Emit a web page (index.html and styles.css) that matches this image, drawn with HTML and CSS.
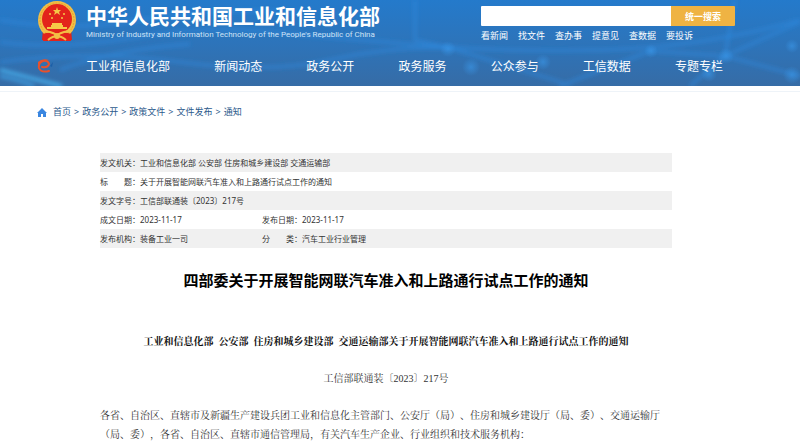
FILE: index.html
```html
<!DOCTYPE html>
<html lang="zh-CN">
  <head>
    <meta charset="UTF-8" />
    <meta name="viewport" content="width=device-width, initial-scale=1.0" />
    <title>四部委关于开展智能网联汽车准入和上路通行试点工作的通知</title>
    <link rel="stylesheet" href="styles.css">
  </head>
  <body>
    <header class="header">
      <svg class="header-bg" viewBox="0 0 800 86" preserveAspectRatio="none" aria-hidden="true">
        <defs>
          <linearGradient id="sky" x1="0" y1="0" x2="0" y2="1">
            <stop offset="0" stop-color="#247acb" />
            <stop offset="0.5" stop-color="#2d74ba" />
            <stop offset="1" stop-color="#366ca6" />
          </linearGradient>
          <radialGradient id="dot">
            <stop offset="0" stop-color="#3b9bee" stop-opacity="0.55" />
            <stop offset="1" stop-color="#3b9bee" stop-opacity="0" />
          </radialGradient>
          <filter id="soft" x="-10%" y="-50%" width="120%" height="200%">
            <feGaussianBlur stdDeviation="2" />
          </filter>
        </defs>
        <rect width="800" height="86" fill="url(#sky)" />
        <g fill="none" stroke="#2f8be0" stroke-opacity="0.6" stroke-width="3" filter="url(#soft)">
          <path d="M0 42Q60 50 130 38T270 32T420 45T600 50T800 20" />
          <path d="M0 20Q70 32 140 20T300 12" />
          <path d="M0 62Q90 50 180 62T330 60T450 48" />
          <path d="M60 70Q110 50 190 44" />
          <path d="M415 0V40L450 48L570 85M650 51L725 56L800 22M725 56L690 86M650 51L560 86M735 0L725 56L800 76" />
        </g>
        <path d="M0 70Q22 76 62 86" fill="none" stroke="#49b4f0" stroke-width="3" filter="url(#soft)" />
        <path d="M0 76Q20 80 34 86" fill="none" stroke="#3f9fe0" stroke-width="3" filter="url(#soft)" />
        <g fill="url(#dot)">
          <circle cx="448" cy="49" r="8" />
          <circle cx="471" cy="67" r="9" />
          <circle cx="543" cy="62" r="8" />
          <circle cx="651" cy="51" r="7" />
          <circle cx="726" cy="56" r="8" />
          <circle cx="709" cy="74" r="8" />
          <circle cx="792" cy="46" r="7" />
          <circle cx="792" cy="75" r="9" />
        </g>
      </svg>

      <div class="header-inner">
        <div class="top">
          <a class="brand" href="#">
            <svg class="emblem" viewBox="0 0 40 42" aria-hidden="true">
              <path d="M6 29L5 40Q12 39 14 41H26Q28 39 35 40L34 29Z" fill="#d8261c" />
              <circle cx="20" cy="20" r="19" fill="#f3bf45" />
              <circle cx="20" cy="20" r="17" fill="none" stroke="#e0a334" stroke-width="1" stroke-dasharray="2 1" />
              <circle cx="20" cy="19" r="15" fill="#e3241b" />
              <path d="M20 7l1 3h3l-2 2 1 3-3-2-3 2 1-3-2-2h3Z" fill="#f6c948" />
              <g fill="#f6c948">
                <circle cx="13" cy="14" r="1" />
                <circle cx="27" cy="14" r="1" />
                <circle cx="15" cy="18" r="1" />
                <circle cx="25" cy="18" r="1" />
                <path d="M15 23h10v2H15ZM14 25h12v2h4v2H10v-2h4Z" />
              </g>
              <path d="M6 34Q13 31 20 35Q27 31 34 34L34 41H6Z" fill="#e3241b" />
              <path d="M6 31Q13 31 20 35Q27 31 34 31M11 40Q16 36 20 36Q24 36 29 40" fill="none" stroke="#f3bf45" stroke-width="2" />
              <circle cx="20" cy="36" r="3" fill="#f3bf45" />
            </svg>
            <span class="brand-text">
              <span class="brand-cn">中华人民共和国工业和信息化部</span>
              <span class="brand-en">Ministry of Industry and Information Technology of the People's Republic of China</span>
            </span>
          </a>

          <div class="search">
            <form class="search-form">
              <input type="text" class="search-input" aria-label="搜索" />
              <button type="submit" class="search-btn">统一搜索</button>
            </form>
            <div class="quick">
              <a href="#">看新闻</a>
              <a href="#">找文件</a>
              <a href="#">查办事</a>
              <a href="#">提意见</a>
              <a href="#">查数据</a>
              <a href="#">要投诉</a>
            </div>
          </div>
        </div>

        <nav class="nav">
          <svg class="nav-logo" viewBox="0 0 16 16" aria-hidden="true">
            <path d="M5 9Q11 10 12 6Q11 2 6 3Q1 5 2 10Q4 15 12 13" fill="none" stroke="#e8512b" stroke-width="2" stroke-linecap="round" />
            <path d="M1 4Q5 0 12 2Q5 2 1 7Z" fill="#e8512b" />
            <path d="M13 8l3-4-1 5Z" fill="#1c5fa8" />
          </svg>
          <div class="nav-links">
            <a href="#">工业和信息化部</a>
            <a href="#">新闻动态</a>
            <a href="#">政务公开</a>
            <a href="#">政务服务</a>
            <a href="#">公众参与</a>
            <a href="#">工信数据</a>
            <a href="#">专题专栏</a>
          </div>
        </nav>
      </div>
    </header>

    <main class="main">
      <div class="crumbs">
        <svg class="home" viewBox="0 0 10 9" aria-hidden="true">
          <path d="M5 0L10 5H9V9H6V6H4V9H1V5H0Z" fill="#3a86e0" />
        </svg>
        <a href="#">首页</a>
        <span>&gt;</span>
        <a href="#">政务公开</a>
        <span>&gt;</span>
        <a href="#">政策文件</a>
        <span>&gt;</span>
        <a href="#">文件发布</a>
        <span>&gt;</span>
        <a href="#">通知</a>
      </div>

      <article class="article">
        <table class="info">
          <tr>
            <th scope="row">发文机关：</th>
            <td colspan="3">工业和信息化部 公安部 住房和城乡建设部 交通运输部</td>
          </tr>
          <tr>
            <th scope="row">标　　题：</th>
            <td colspan="3">关于开展智能网联汽车准入和上路通行试点工作的通知</td>
          </tr>
          <tr>
            <th scope="row">发文字号：</th>
            <td colspan="3">工信部联通装〔2023〕217号</td>
          </tr>
          <tr>
            <th scope="row">成文日期：</th>
            <td class="date">2023-11-17</td>
            <th scope="row">发布日期：</th>
            <td>2023-11-17</td>
          </tr>
          <tr>
            <th scope="row">发布机构：</th>
            <td>装备工业一司</td>
            <th scope="row">分　　类：</th>
            <td>汽车工业行业管理</td>
          </tr>
        </table>

        <h1>四部委关于开展智能网联汽车准入和上路通行试点工作的通知</h1>

        <div class="content">
          <p class="subtitle">工业和信息化部&ensp;公安部&ensp;住房和城乡建设部&ensp;交通运输部关于开展智能网联汽车准入和上路通行试点工作的通知</p>
          <p class="number">工信部联通装〔2023〕217号</p>
          <p>各省、自治区、直辖市及新疆生产建设兵团工业和信息化主管部门、公安厅（局）、住房和城乡建设厅（局、委）、交通运输厅（局、委），各省、自治区、直辖市通信管理局，有关汽车生产企业、行业组织和技术服务机构：</p>
        </div>
      </article>
    </main>
  </body>
</html>
```
FILE: styles.css
```css
* {
  margin: 0;
  padding: 0;
  box-sizing: border-box;
}

body {
  font-family: "Noto Sans", "Noto Sans CJK SC", sans-serif;
  background: #fff;
  color: #333;
  text-spacing-trim: space-all;
}

a {
  color: inherit;
  text-decoration: none;
}

.header {
  position: relative;
  color: #fff;
}

.header-bg {
  position: absolute;
  inset: 0;
  width: 100%;
  height: 100%;
}

.header-inner {
  position: relative;
  padding: 0 65px 0 37px;
}

.top {
  display: flex;
  justify-content: space-between;
}

.brand {
  display: flex;
}

.emblem {
  width: 40px;
  height: 42px;
  margin-right: 9px;
}

.brand-text {
  display: flex;
  flex-direction: column;
}

.brand-cn {
  font-family: "Noto Sans CJK SC", sans-serif;
  font-size: 21px;
  line-height: 30px;
  font-weight: 700;
}

.brand-en {
  font-family: Roboto, sans-serif;
  font-size: 8px;
  line-height: 10px;
  color: #cfe3f6;
}

.search {
  width: 254px;
  padding-top: 6px;
}

.search-form {
  display: flex;
  height: 20px;
}

.search-input {
  flex: 1;
  min-width: 0;
  border: none;
  border-radius: 1px 0 0 1px;
  background: #fff;
}

.search-btn {
  width: 64px;
  border: none;
  border-radius: 0 1px 1px 0;
  background: #efb343;
  color: #fff;
  font-family: inherit;
  font-size: 9px;
  font-weight: 700;
}

.quick {
  display: flex;
  gap: 10px;
  font-size: 9px;
  line-height: 20px;
}

.nav {
  display: flex;
  align-items: center;
  height: 40px;
}

.nav-logo {
  width: 16px;
  height: 16px;
}

.nav-links {
  flex: 1;
  display: flex;
  justify-content: space-between;
  padding: 0 12px 0 33px;
  font-size: 12px;
}

.main {
  margin-top: 5px;
  padding: 0 65px 0 37px;
  border-top: 1px solid #eef3f8;
}

.crumbs {
  display: flex;
  align-items: center;
  gap: 3px;
  padding-top: 12px;
  font-size: 9px;
  line-height: 16px;
  color: #2c5a8c;
}

.home {
  width: 10px;
  height: 9px;
  margin-right: 3px;
}

.article {
  padding: 33px 63px 0;
}

.info {
  width: 100%;
  border-collapse: collapse;
  font-size: 8px;
  line-height: 19px;
}

.info tr:nth-child(odd) {
  background: #f0f0f0;
}

.info th {
  width: 40px;
  font-weight: 400;
  text-align: left;
  white-space: nowrap;
}

.info .date {
  width: 122px;
}

h1 {
  margin-top: 20px;
  font-size: 15px;
  line-height: 24px;
  text-align: center;
  color: #000;
}

.content {
  padding-top: 40px;
  font-family: "Liberation Serif", "Noto Serif CJK SC", "Noto Sans CJK SC", serif;
  font-size: 10px;
  line-height: 19px;
}

.content .subtitle {
  font-weight: 700;
  text-align: center;
  color: #111;
}

.content .number {
  margin: 18px 0;
  text-align: center;
}
```
